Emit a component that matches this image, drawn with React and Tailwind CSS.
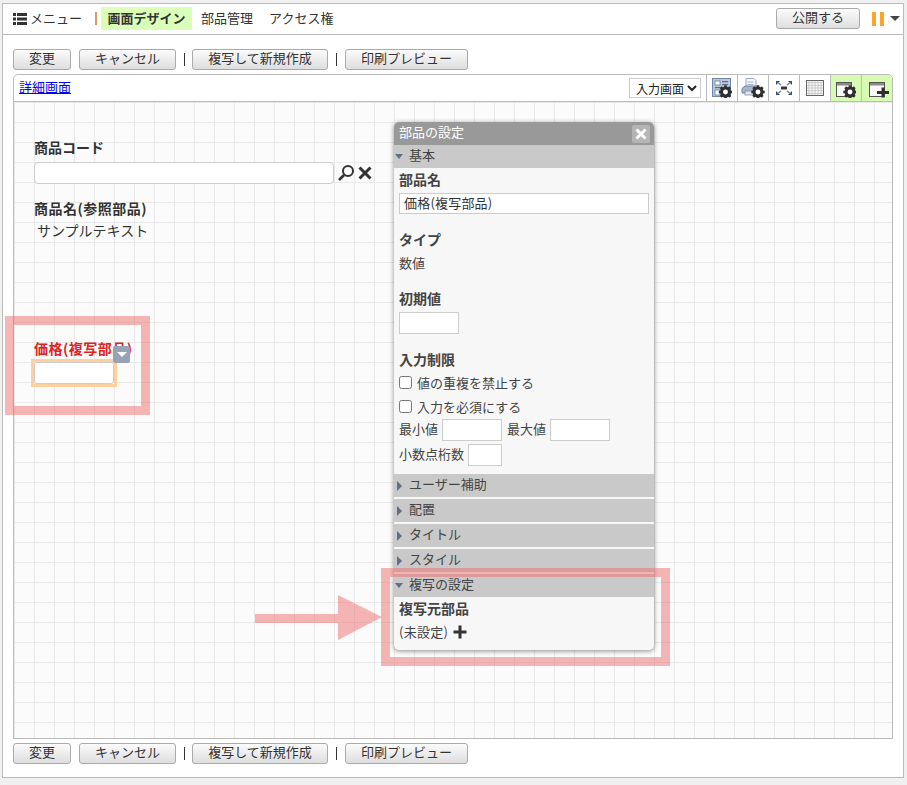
import { Fragment } from "react";

const FONT = "font-['Noto_Sans_CJK_JP','Liberation_Sans',sans-serif]";

function Gear({ x, y, r = 5.5 }) {
  const teeth = [0, 45, 90, 135];
  return (
    <g>
      {teeth.map((a) => (
        <rect key={a} x={x - 1.3} y={y - r - 1.2} width="2.6" height={2 * r + 2.4} fill="#2f2f2f" transform={`rotate(${a} ${x} ${y})`} />
      ))}
      <circle cx={x} cy={y} r={r} fill="#2f2f2f" />
      <circle cx={x} cy={y} r={r * 0.45} fill="#fff" />
    </g>
  );
}

function ScreenSettingIcon() {
  return (
    <svg width="20" height="20" viewBox="0 0 20 20">
      <rect x="0.5" y="0.5" width="18" height="18" fill="#b9c8de" stroke="#6f86a8" />
      <rect x="3" y="3" width="5" height="4" fill="#fff" stroke="#5d6f8a" strokeWidth="0.7" />
      <rect x="10" y="3" width="6" height="1.2" fill="#5d6f8a" />
      <rect x="10" y="6" width="6" height="1.2" fill="#5d6f8a" />
      <rect x="3" y="9" width="6" height="1.2" fill="#5d6f8a" />
      <rect x="3" y="12" width="5" height="5" fill="#fff" stroke="#5d6f8a" strokeWidth="0.7" />
      <Gear x={13.5} y={14} />
    </svg>
  );
}

function PrintSettingIcon() {
  return (
    <svg width="24" height="20" viewBox="0 0 24 20">
      <path d="M5 0.5h8l2 2v7H5z" fill="#f4f6fa" stroke="#9aa8bd" />
      <path d="M6.5 4h6M6.5 6.5h6" stroke="#aab6c8" />
      <path d="M1 15V10.5L4 8h13l2 3v4z" fill="#a8b6ca" stroke="#71829c" />
      <rect x="4" y="13" width="10" height="4" fill="#dfe5ee" stroke="#71829c" strokeWidth="0.7" />
      <Gear x={17} y={14} />
    </svg>
  );
}

function FullscreenIcon() {
  return (
    <svg width="18" height="16" viewBox="0 0 18 16">
      <rect x="6" y="6.5" width="6" height="3" fill="#3a3a3a" />
      <path d="M1 1h4L1 5zM17 1h-4l4 4zM1 15h4l-4-4zM17 15h-4l4-4z" fill="#2f4a6a" />
      <path d="M2 2l4 3M16 2l-4 3M2 14l4-3M16 14l-4-3" stroke="#6a7f9a" strokeWidth="1.2" />
    </svg>
  );
}

function GridIcon() {
  const columns = [3, 6, 9, 12, 15];
  const rows = [2.7, 5.4, 8, 10.7, 13.4];
  return (
    <svg width="18" height="16" viewBox="0 0 18 16">
      <rect x="0.5" y="0.5" width="17" height="15" fill="#fff" stroke="#666" />
      {columns.map((n) => (
        <line key={n} x1={n} y1="1" x2={n} y2="15" stroke="#bbbbbb" strokeWidth="0.8" />
      ))}
      {rows.map((n) => (
        <Fragment key={n}>
          <line x1="1" y1={n} x2="17" y2={n} stroke="#bbbbbb" strokeWidth="0.8" />
        </Fragment>
      ))}
    </svg>
  );
}

function WindowGearIcon() {
  return (
    <svg width="20" height="20" viewBox="0 0 20 20">
      <rect x="0.5" y="4.5" width="15" height="14" fill="#fafafa" stroke="#555" />
      <rect x="1" y="5" width="14" height="2.5" fill="#8a8a8a" />
      <Gear x={14} y={14} />
    </svg>
  );
}

function WindowPlusIcon() {
  return (
    <svg width="25" height="20" viewBox="0 0 25 20">
      <rect x="4.5" y="4.5" width="15" height="14" fill="#fafafa" stroke="#555" />
      <rect x="5" y="5" width="14" height="2.5" fill="#8a8a8a" />
      <path d="M18 9.5v10M12 14.5h12" stroke="#2f2f2f" strokeWidth="3" />
    </svg>
  );
}

function ActionButton({ className, children }) {
  return (
    <button className={`h-[21px] rounded-[3px] border border-[#aaaaaa] bg-gradient-to-b from-[#fbfbfb] to-[#dedede] pb-[3px] text-[13px] leading-[16px] text-[#333] ${className}`}>
      {children}
    </button>
  );
}

function ActionBar({ className }) {
  return (
    <div className={`flex items-center ${className}`}>
      <ActionButton className="w-[58px]">変更</ActionButton>
      <ActionButton className="ml-2 w-[97px]">キャンセル</ActionButton>
      <span className="ml-2 mr-[7px] h-[13px] w-[1px] bg-[#333]" />
      <ActionButton className="w-[136px]">複写して新規作成</ActionButton>
      <span className="ml-2 mr-2 h-[13px] w-[1px] bg-[#333]" />
      <ActionButton className="w-[123px]">印刷プレビュー</ActionButton>
    </div>
  );
}

function SectionBar({ open, children }) {
  return (
    <div className="flex h-[23px] items-center bg-[#c9c9c9] text-[13px] text-[#444]">
      {open ? (
        <span className="ml-[1px] mr-[6px] h-0 w-0 border-x-[4.5px] border-t-[5px] border-x-transparent border-t-[#5f6f88]" />
      ) : (
        <span className="ml-[3px] mr-[7px] h-0 w-0 border-y-[5px] border-l-[5px] border-y-transparent border-l-[#5f6f88]" />
      )}
      <span className="pb-[3px]">{children}</span>
    </div>
  );
}

function ToolCell({ className = "", children }) {
  return (
    <div className={`flex h-full w-[31px] items-center justify-center border-l border-[#bbbbbb] ${className}`}>
      {children}
    </div>
  );
}

function SettingsPanel() {
  return (
    <div className="absolute left-[380px] top-[47px] w-[260px] rounded-[5px] bg-[#f7f7f7] shadow-[0_1px_5px_rgba(0,0,0,0.45)]">
      <div className="flex h-[23px] items-center justify-between rounded-t-[5px] bg-[#999999] pl-[5px] pr-[4px] text-[13px] text-white">
        <span className="pb-[3px]">部品の設定</span>
        <span className="flex h-[18px] w-[18px] items-center justify-center rounded-[2px] bg-[#b5b5b5]">
          <svg width="12" height="12" viewBox="0 0 12 12">
            <path d="M1.5 1.5l9 9M10.5 1.5l-9 9" stroke="#fff" strokeWidth="3" />
          </svg>
        </span>
      </div>
      <SectionBar open>基本</SectionBar>
      <div className="h-[306px] px-[5px] text-[13px] text-[#444]">
        <div className="mb-[3px] text-[14px] font-bold leading-[22px]">部品名</div>
        <div className="h-[21px] border border-[#cccccc] bg-white pl-1 text-[13px] leading-[18px] tracking-[0.2px] text-[#333]">価格(複写部品)</div>
        <div className="pt-[14px] text-[14px] font-bold leading-[22px]">タイプ</div>
        <div className="pt-[3px] leading-[20px]">数値</div>
        <div className="pt-[14px] text-[14px] font-bold leading-[22px]">初期値</div>
        <div className="mt-[3px] h-[22px] w-[60px] border border-[#cccccc] bg-white" />
        <div className="pt-[14px] text-[14px] font-bold leading-[22px]">入力制限</div>
        <label className="mt-[1px] flex h-6 items-center gap-[5px] pb-[1px]">
          <input type="checkbox" className="h-[13px] w-[13px]" />
          値の重複を禁止する
        </label>
        <label className="flex h-6 items-center gap-[5px] pb-[1px]">
          <input type="checkbox" className="h-[13px] w-[13px]" />
          入力を必須にする
        </label>
        <div className="flex h-[22px] items-center">
          <span className="mr-[4px] pb-[3px]">最小値</span>
          <div className="h-[22px] w-[60px] border border-[#cccccc] bg-white" />
          <span className="ml-[5px] mr-[4px] pb-[3px]">最大値</span>
          <div className="h-[22px] w-[60px] border border-[#cccccc] bg-white" />
        </div>
        <div className="mt-[3px] flex h-[22px] items-center">
          <span className="mr-[4px] pb-[3px]">小数点桁数</span>
          <div className="h-[22px] w-[34px] border border-[#cccccc] bg-white" />
        </div>
      </div>
      <div className="flex flex-col gap-[2px]">
        <SectionBar>ユーザー補助</SectionBar>
        <SectionBar>配置</SectionBar>
        <SectionBar>タイトル</SectionBar>
        <SectionBar>スタイル</SectionBar>
        <SectionBar open>複写の設定</SectionBar>
      </div>
      <div className="h-[53px] px-[5px] text-[13px] text-[#444]">
        <div className="text-[14px] font-bold leading-[22px]">複写元部品</div>
        <div className="mt-[1px] flex items-center gap-[5px] leading-[24px] tracking-[0.3px]">
          (未設定)
          <svg width="14" height="14" viewBox="0 0 14 14">
            <path d="M7 0.5v13M0.5 7h13" stroke="#333" strokeWidth="3" />
          </svg>
        </div>
      </div>
    </div>
  );
}

export default function App() {
  return (
    <div className={`h-[785px] w-[907px] overflow-hidden bg-[#f0f0f0] pl-[2px] pt-[3px] ${FONT}`}>
      <div className="relative h-[775px] w-[902px] border border-[#bbbbbb] bg-white">
        <div className="flex h-[31px] items-center border-b border-[#bbbbbb] pb-[1px] pl-[10px] text-[13px] text-[#333]">
          <svg width="14" height="12" viewBox="0 0 14 12" className="mr-[3px]">
            <path d="M0 0h3v3H0zM4 0h10v3H4zM0 4.5h3v3H0zM4 4.5h10v3H4zM0 9h3v3H0zM4 9h10v3H4z" fill="#333" />
          </svg>
          <span className="pb-[2px]">メニュー</span>
          <span className="ml-[13px] mr-[4px] h-[13px] w-[2px] bg-[#d2a066]" />
          <span className="flex h-[23px] w-[91px] items-center justify-center bg-[#daffb8] pb-[2px] font-bold">画面デザイン</span>
          <span className="ml-[9px] pb-[2px]">部品管理</span>
          <span className="ml-[16px] pb-[2px]">アクセス権</span>
          <div className="ml-auto flex items-center pr-[3px]">
            <ActionButton className="w-[84px]">公開する</ActionButton>
            <span className="ml-3 h-[14px] w-[4px] bg-[#faa62a]" />
            <span className="ml-1 h-[14px] w-[4px] bg-[#faa62a]" />
            <span className="ml-[6px] h-0 w-0 border-x-[5px] border-t-[5px] border-x-transparent border-t-[#444]" />
          </div>
        </div>

        <ActionBar className="ml-[10px] mt-[14px]" />

        <div className="relative ml-[10px] mt-[4px] h-[665px] w-[880px] rounded-t-[5px] border border-[#bbbbbb]">
          <div className="flex h-[27px] items-center border-b border-[#bbbbbb] pl-[5px] text-[13px]">
            <a href="#" className="mb-[2px] text-[#0000ee] underline">詳細画面</a>
            <select className="ml-auto mr-[5px] h-[20px] w-[72px] border border-[#cccccc] bg-white pl-[2px] text-[12px] text-[#222]">
              <option>入力画面</option>
            </select>
            <ToolCell><ScreenSettingIcon /></ToolCell>
            <ToolCell><PrintSettingIcon /></ToolCell>
            <ToolCell><FullscreenIcon /></ToolCell>
            <ToolCell><GridIcon /></ToolCell>
            <ToolCell className="bg-[#d8fbb4]"><WindowGearIcon /></ToolCell>
            <ToolCell className="rounded-tr-[5px] bg-[#d8fbb4]"><WindowPlusIcon /></ToolCell>
          </div>

          <div className="relative h-[636px] bg-[#fbfbfb] bg-[linear-gradient(#e9e9e9_1px,transparent_1px),linear-gradient(90deg,#e9e9e9_1px,transparent_1px)] bg-[size:20px_20px] pl-[20px] pt-[35px] text-[14px] text-[#333]">
            <div className="font-bold leading-[21px]">商品コード</div>
            <div className="mt-[4px] flex items-center">
              <div className="h-[22px] w-[300px] rounded-[4px] border border-[#cccccc] bg-white" />
              <svg width="18" height="18" viewBox="0 0 18 18" className="ml-[3px]">
                <circle cx="11" cy="7" r="5" fill="none" stroke="#333" strokeWidth="2" />
                <path d="M7 11l-5 5" stroke="#333" strokeWidth="2.6" />
              </svg>
              <svg width="14" height="14" viewBox="0 0 14 14" className="ml-[3px]">
                <path d="M1.5 1.5l11 11M12.5 1.5l-11 11" stroke="#333" strokeWidth="3" />
              </svg>
            </div>
            <div className="mt-[14px] font-bold leading-[21px] tracking-[0.5px]">商品名(参照部品)</div>
            <div className="pl-[3px] pt-[1px] leading-[21px]">サンプルテキスト</div>

            <div className="relative mt-[97px] w-[80px]">
              <div className="whitespace-nowrap font-bold leading-[21px] tracking-[0.5px] text-[#dd2222]">価格(複写部品)</div>
              <div className="-ml-[3px] h-[28px] w-[86px] border-[3px] border-[#ffcf9e]">
                <div className="h-[22px] w-[80px] rounded-[3px] border border-[#cccccc] bg-white" />
              </div>
              <span className="absolute left-[79px] top-[8px] flex h-[17px] w-[17px] items-center justify-center rounded-[2px] bg-[#98a2b5]">
                <span className="h-0 w-0 border-x-[5px] border-t-[5px] border-x-transparent border-t-white" />
              </span>
            </div>
          </div>

          <SettingsPanel />
        </div>

        <ActionBar className="ml-[10px] mt-[4px]" />

        {/* annotations */}
        <div className="absolute left-[2px] top-[312px] h-[99px] w-[145px] border-[9px] border-[rgba(238,110,110,0.5)]" />
        <div className="absolute left-[378px] top-[564px] h-[98px] w-[289px] border-[9px] border-[rgba(238,110,110,0.5)]" />
        <svg width="130" height="48" viewBox="0 0 130 48" className="absolute left-[252px] top-[591px]">
          <path d="M0 19h83V0l44 22-44 23V28H0z" fill="rgba(238,110,110,0.5)" />
        </svg>
      </div>
    </div>
  );
}
